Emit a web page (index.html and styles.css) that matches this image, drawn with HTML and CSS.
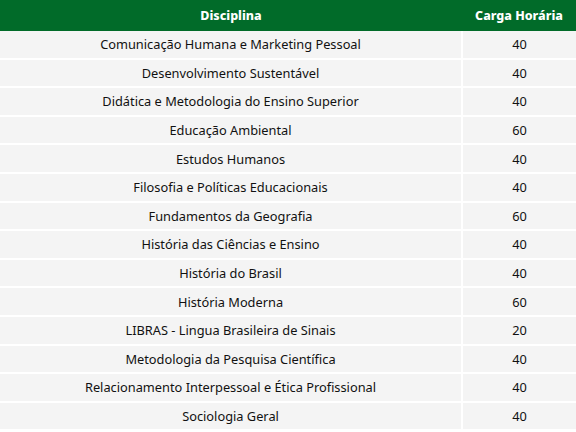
FILE: index.html
```html
<!DOCTYPE html>
<html lang="pt-BR">
<head>
<meta charset="utf-8">
<link rel="stylesheet" href="styles.css">
</head>
<body>
<table class="grade">
  <thead>
    <tr><th class="col-disc">Disciplina</th><th class="col-ch">Carga Horária</th></tr>
  </thead>
  <tbody>
    <tr><td>Comunicação Humana e Marketing Pessoal</td><td>40</td></tr>
    <tr><td>Desenvolvimento Sustentável</td><td>40</td></tr>
    <tr><td>Didática e Metodologia do Ensino Superior</td><td>40</td></tr>
    <tr><td>Educação Ambiental</td><td>60</td></tr>
    <tr><td>Estudos Humanos</td><td>40</td></tr>
    <tr><td>Filosofia e Políticas Educacionais</td><td>40</td></tr>
    <tr><td>Fundamentos da Geografia</td><td>60</td></tr>
    <tr><td>História das Ciências e Ensino</td><td>40</td></tr>
    <tr><td>História do Brasil</td><td>40</td></tr>
    <tr><td>História Moderna</td><td>60</td></tr>
    <tr><td>LIBRAS - Lingua Brasileira de Sinais</td><td>20</td></tr>
    <tr><td>Metodologia da Pesquisa Científica</td><td>40</td></tr>
    <tr><td>Relacionamento Interpessoal e Ética Profissional</td><td>40</td></tr>
    <tr><td>Sociologia Geral</td><td>40</td></tr>
  </tbody>
</table>
</body>
</html>
```
FILE: styles.css
```css
html, body {
  margin: 0;
  padding: 0;
  background: #ffffff;
}
.grade {
  width: 576px;
  border-collapse: collapse;
  font-family: "Noto Sans", "Liberation Sans", sans-serif;
  table-layout: fixed;
}
.grade th {
  background: #016b29;
  color: #ffffff;
  font-weight: 800;
  font-size: 12.5px;
  height: 31px;
  padding: 0;
  text-align: center;
}
.col-disc { width: 462px; }
.col-ch { width: 114px; }
.grade td {
  background: #f4f4f4;
  color: #111111;
  font-size: 12.8px;
  height: 26.6px;
  padding: 0;
  text-align: center;
  border-bottom: 2px solid #ffffff;
}
.grade td + td {
  border-left: 2px solid #ffffff;
}
```
